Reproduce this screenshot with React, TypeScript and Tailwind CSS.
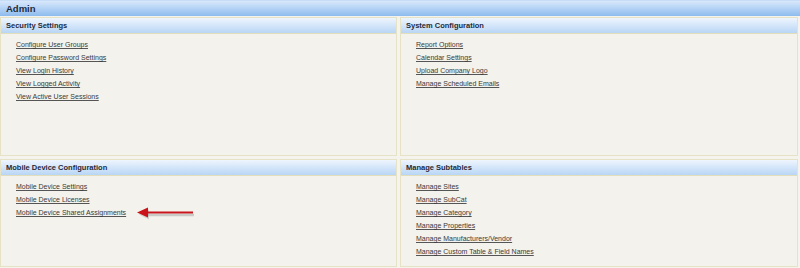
const sections = [
  {
    title: "Security Settings",
    links: [
      "Configure User Groups",
      "Configure Password Settings",
      "View Login History",
      "View Logged Activity",
      "View Active User Sessions",
    ],
  },
  {
    title: "System Configuration",
    links: ["Report Options", "Calendar Settings", "Upload Company Logo", "Manage Scheduled Emails"],
  },
  {
    title: "Mobile Device Configuration",
    links: ["Mobile Device Settings", "Mobile Device Licenses", "Mobile Device Shared Assignments"],
    arrow: true,
  },
  {
    title: "Manage Subtables",
    links: [
      "Manage Sites",
      "Manage SubCat",
      "Manage Category",
      "Manage Properties",
      "Manage Manufacturers/Vendor",
      "Manage Custom Table & Field Names",
    ],
  },
]

const Arrow = () => (
  <svg width="60" height="14" viewBox="0 0 60 14" className="ml-[11px]">
    <line x1="10" y1="9" x2="57" y2="9" stroke="#9a9a9a" strokeWidth="2.5" opacity="0.45" />
    <path d="M2 8.5 L12 3.5 L12 13.5 Z" fill="#9a9a9a" opacity="0.35" />
    <line x1="9" y1="6.5" x2="56" y2="6.5" stroke="#c8141a" strokeWidth="2.2" />
    <path d="M0 6.5 L11 1.5 L11 11.5 Z" fill="#c8141a" />
  </svg>
)

export default function App() {
  return (
    <div className="w-[800px] h-[268px] bg-[#f4f3ed] font-['Liberation_Sans',Arial,sans-serif] overflow-hidden">
      <div className="h-[16px] bg-gradient-to-b from-[#d9e8fb] to-[#8dbbee] border-t border-[#c6dcf7] px-[6px] text-[9.5px] font-bold text-[#1e2a3a] leading-[15px]">
        Admin
      </div>
      <div className="grid grid-cols-[397px_398px] grid-rows-[139px_108px] gap-x-[3px] gap-y-[3px] pt-[1px]">
        {sections.map((s) => (
          <div key={s.title} className="bg-[#f3f2ec] border border-[#e6e2c6] flex flex-col">
            <div className="h-[16px] bg-gradient-to-b from-[#eef5fe] to-[#b9d6f5] border-b border-[#e2ddba] px-[5px] text-[7.5px] font-bold text-[#1e2a3a] leading-[15px]">
              {s.title}
            </div>
            <div className="pt-[4px] pl-[15px] flex flex-col">
              {s.links.map((l, i) => (
                <div key={l} className="h-[13px] flex items-center">
                  <a href="#" className="text-[7px] text-[#3a3a3a] underline decoration-[#555] leading-[13px]">
                    {l}
                  </a>
                  {s.arrow && i === s.links.length - 1 && <Arrow />}
                </div>
              ))}
            </div>
          </div>
        ))}
      </div>
    </div>
  )
}
